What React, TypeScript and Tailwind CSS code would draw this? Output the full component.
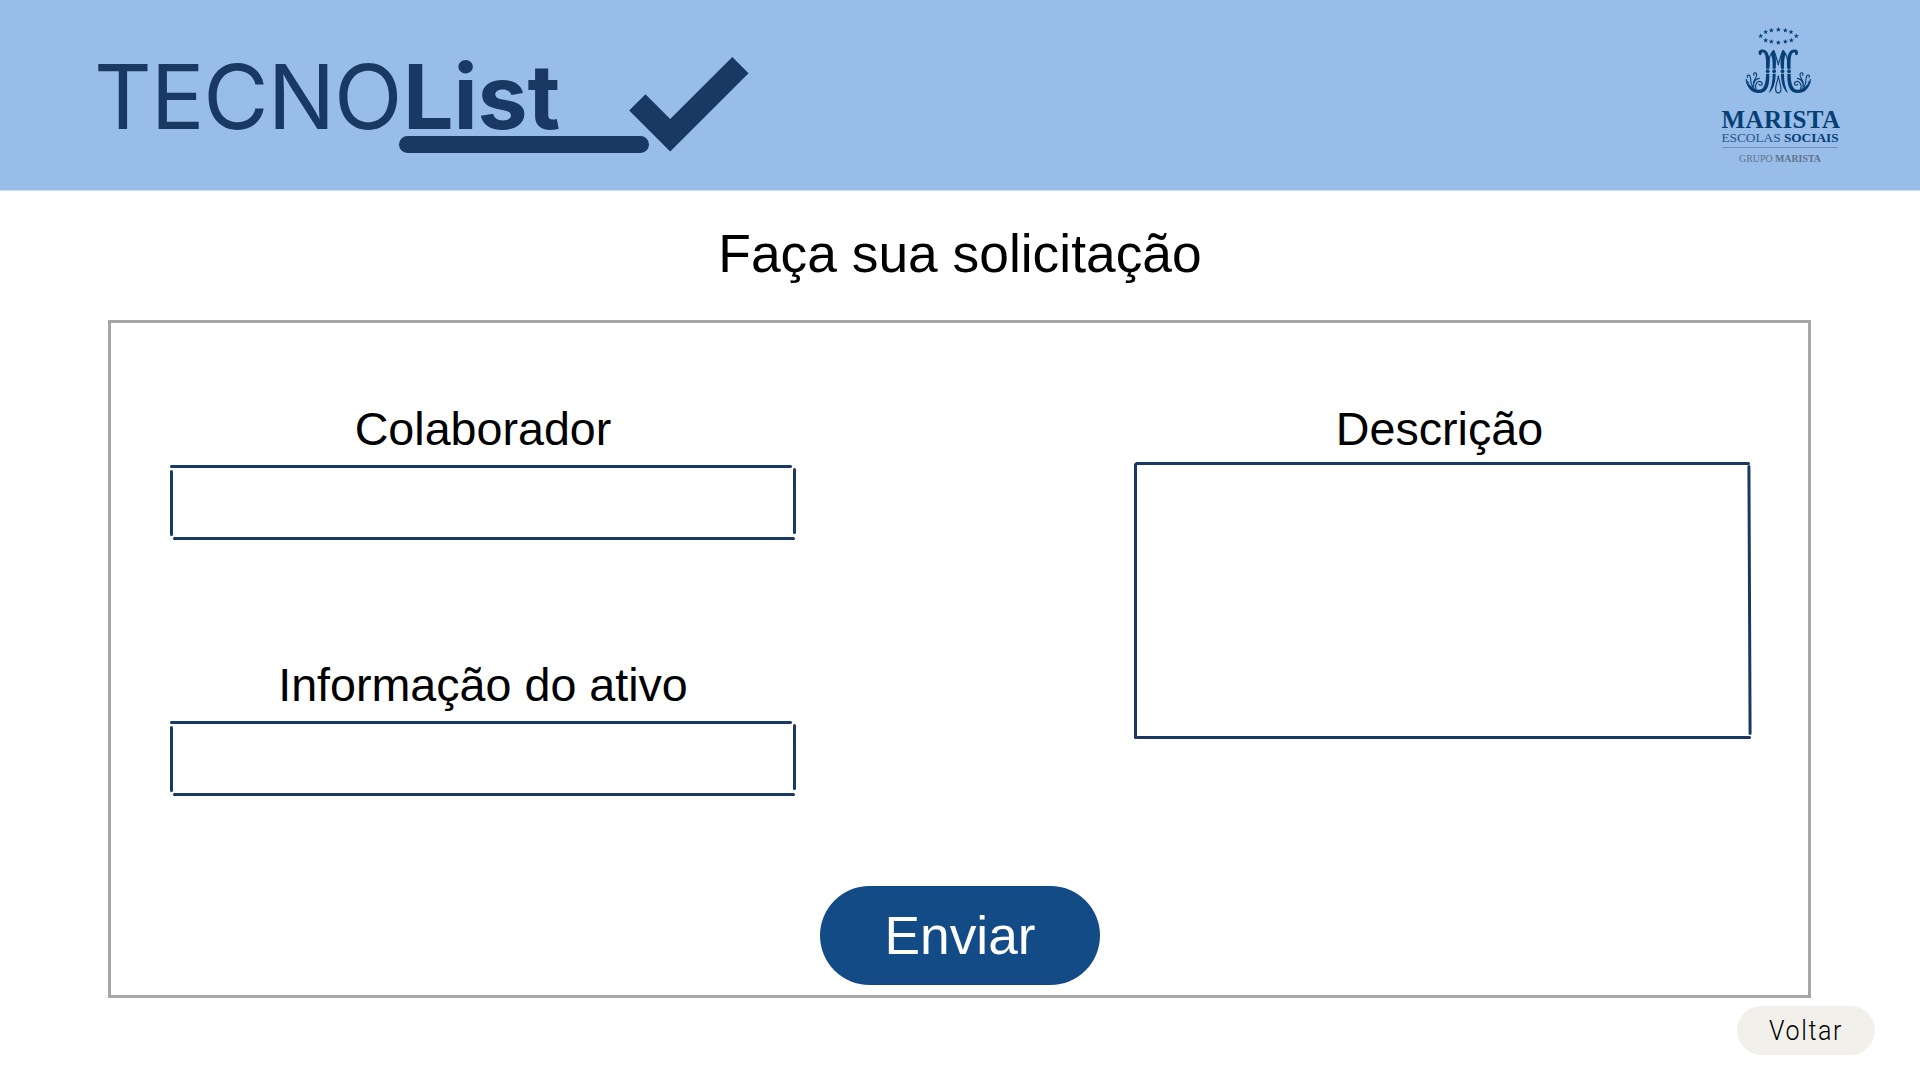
const INK = "bg-[#193964]";

function Checkmark() {
  return (
    <svg className="ml-[70px] mt-[56px] h-[98px] w-[122px]" viewBox="0 0 122 98" fill="#193964">
      <path d="M2.2 54.6 18.5 38.3 43.2 63 105.3.9 121.6 17.2 43.2 95.6Z" />
    </svg>
  );
}

function Brand() {
  return (
    <div className="relative flex h-full font-['Inter'] text-[#193964]">
      <div className="mt-[43px] flex h-[108px] items-center whitespace-nowrap text-[89.5px] leading-[108px]">
        <span className="w-[309px] tracking-[-1.1px]">TECNO</span>
        <span className="w-[154px] font-bold tracking-[-0.2px]">List</span>
      </div>
      <Checkmark />
      <div className="absolute left-[305px] top-[136px] h-[17px] w-[250px] rounded-full bg-[#193964]" />
    </div>
  );
}

function Star({ x, y }: { x: number; y: number }) {
  return (
    <path
      transform={`translate(${x} ${y}) scale(8)`}
      d="M0-1 .25-.32.95-.31.39.12.59.81 0 .4-.59.81-.39.12-.95-.31-.25-.32Z"
    />
  );
}

const STARS: [number, number][] = [
  [56, 36], [71, 24], [88, 19], [109, 17], [130, 19], [147, 24], [163, 36],
  [71, 49], [88, 53], [109, 56], [130, 53], [148, 49],
];

function CrestHalf() {
  return (
    <g>
      <path d="M50 88C47 76 66 72 75 83c8 11 9 32 7 51H72c1-26 0-48-10-49-5 0-2 8-7 9-3 0-4-2-5-6Z" />
      <path d="M94 77c8 12 9 37 7 57h-9c0-20 0-32-5-42-4 10-5 25-6 42l-4-2c0-24 6-45 17-55Z" />
      <path d="M72 149h10c1 34-5 58-32 58-22 0-35-17-40-40 10 14 22 26 38 30 18 2 24-18 24-48Z" />
      <path d="M92 149h9c0 24-6 48-21 58 8-16 12-34 12-58Z" />
      <circle cx="77" cy="141.500" r="5.500" />
      <circle cx="96.500" cy="141.500" r="5.500" />
      <g fill="none" stroke="#053f75" strokeWidth="3.4" strokeLinecap="round">
        <path d="M96 80c5 12 9 28 13 42M109 156c-2 16-9 30-8 42 1 8 8 9 8 9" />
        <path d="M32 188c-10-10-2-24-9-33-4-5-10 0-6 5" />
        <path d="M35 190c-6-22 11-26 9-39-2-8-12-5-8 3" />
        <path d="M42 194c-5-14 6-26 16-20 7 6-2 14-7 7" />
        <path d="M36 176c4-10 10-12 16-13M20 176c-5-2-7-6-7-10" />
      </g>
    </g>
  );
}

function Marista() {
  return (
    <div className="mr-[80px] mt-[24px] flex w-[120px] flex-col items-center whitespace-nowrap font-['Liberation_Serif'] text-[#053f75]">
      <svg className="-ml-[5px] h-[72px] w-[72px]" viewBox="0 0 216 216" fill="#053f75">
        {STARS.map(([x, y]) => (
          <Star key={`${x}-${y}`} x={x} y={y} />
        ))}
        <CrestHalf />
        <g transform="translate(218 0) scale(-1 1)">
          <CrestHalf />
        </g>
      </svg>
      <div className="ml-[2px] mt-[11px] text-[25px] font-bold leading-[25px] tracking-[0.4px]">MARISTA</div>
      <div className="-mt-px text-[13.3px] leading-[14px]">
        <span className="text-[#24568a]">ESCOLAS</span> <b>SOCIAIS</b>
      </div>
      <div className="mt-[2px] h-px w-[116px] bg-[#7590b0]" />
      <div className="mt-[5px] text-[9.9px] leading-[11px] text-[#62728a]">
        GRUPO <b>MARISTA</b>
      </div>
    </div>
  );
}

function Field({ label }: { label: string }) {
  return (
    <label className="block w-[626px]">
      <span className="block h-[54px] text-center text-[46.65px] leading-[54px]">{label}</span>
      <span className="relative mt-[9px] block h-[76px]">
        <span className={`absolute left-0 top-[0.3px] h-[3px] w-[622px] rounded-full ${INK}`} />
        <span className={`absolute left-0 top-[5px] h-[66px] w-[3px] rounded-full ${INK}`} />
        <span className={`absolute left-[3px] top-[72px] h-[3px] w-[622px] rounded-full ${INK}`} />
        <span className={`absolute left-[623.4px] top-[3px] h-[66px] w-[3px] rounded-full ${INK}`} />
      </span>
    </label>
  );
}

function Description() {
  return (
    <label className="block w-[618px]">
      <span className="block h-[54px] pr-[7px] text-center text-[46.65px] leading-[54px]">Descrição</span>
      <span className="relative mt-[6px] block h-[278px]">
        <span className={`absolute left-[1px] top-0 h-[3px] w-[615px] rounded-full ${INK}`} />
        <span className={`absolute left-0 top-[1px] h-[276px] w-[3px] rounded-full ${INK}`} />
        <span className={`absolute left-[2px] top-[274px] h-[3px] w-[615px] rounded-full ${INK}`} />
        <span className={`absolute left-[614px] top-[3px] h-[270px] w-[3px] rotate-[-0.25deg] rounded-full ${INK}`} />
      </span>
    </label>
  );
}

export default function App() {
  return (
    <div className="flex h-[1080px] w-[1920px] flex-col overflow-hidden bg-white font-['Liberation_Sans'] text-black">
      <header className="flex h-[191px] shrink-0 items-start justify-between border-b border-[#cfe0f5] bg-[#99bde9] pl-[94px]">
        <Brand />
        <Marista />
      </header>
      <h1 className="mt-[32px] h-[62px] text-center text-[53.35px] leading-[62px]">Faça sua solicitação</h1>
      <main className="ml-[108px] mt-[35px] flex h-[678px] w-[1703px] shrink-0 flex-col items-center border-[3px] border-[#a6a6a6]">
        <div className="flex h-[563px] w-full justify-between pl-[59px] pr-[56px] pt-[79px]">
          <div className="flex flex-col gap-[117px]">
            <Field label="Colaborador" />
            <Field label="Informação do ativo" />
          </div>
          <Description />
        </div>
        <button className="h-[99px] w-[280px] shrink-0 rounded-full bg-[#124b85] pl-px text-[53.3px] leading-[99px] text-white">
          Enviar
        </button>
      </main>
      <button className="ml-[1737px] mt-[8px] h-[49px] w-[138px] shrink-0 rounded-full bg-[#f1f0eb] font-['Roboto'] text-[28.5px] font-light leading-[49px]">
        <span className="inline-block scale-x-[0.88] tracking-[1.8px]">Voltar</span>
      </button>
    </div>
  );
}
